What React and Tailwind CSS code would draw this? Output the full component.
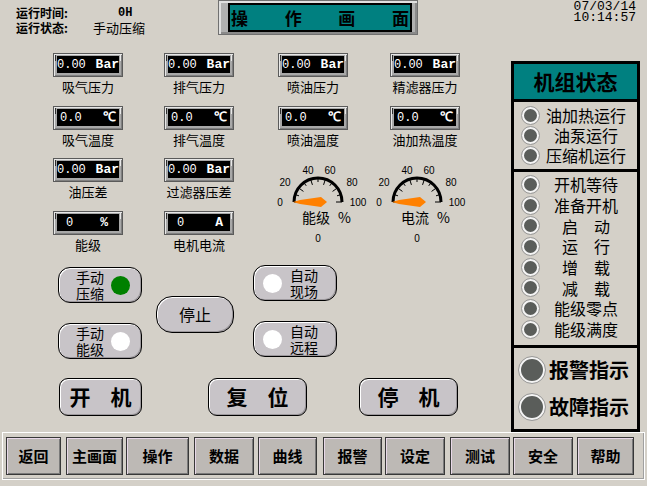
import React from 'react';

const cjk = "font-['Noto_Sans_CJK_SC',sans-serif]";
const mono = "font-['Liberation_Mono',monospace]";

function Readout({ value, unit, pad }) {
  return (
    <div className="w-[70px] h-[24px] bg-[#a8a8a8] border border-[#5a5a5a] shadow-[inset_1px_1px_0_#e8e8e8,inset_-1px_-1px_0_#808080] pt-[2px] pb-[3px] px-[3px] relative">
      <div className="absolute left-[1px] top-[1px] w-[1px] h-[6px] bg-[#303030]" />
      <div className="absolute right-[1px] top-[1px] w-[1px] h-[6px] bg-[#e8e8e8]" />
      <div className={`h-full bg-black flex items-center justify-between text-white ${mono} ${pad}`}>
        <span className="text-[12px] leading-none">{value}</span>
        <span className="text-[13px] font-bold leading-none">{unit}</span>
      </div>
    </div>
  );
}

function Cell({ value, unit, pad, label, h }) {
  return (
    <div className={`flex flex-col ${h}`}>
      <Readout value={value} unit={unit} pad={pad} />
      <div className={`w-[70px] flex justify-center whitespace-nowrap text-[13px] leading-[15px] mt-[2px] text-black ${cjk}`}>{label}</div>
    </div>
  );
}

function Gauge({ label }) {
  const cx = 48, cy = 40, r = 24;
  const ticks = [];
  for (let i = 0; i <= 10; i++) {
    const a = Math.PI * (1 - i / 10);
    const len = i % 2 === 0 ? 6 : 4;
    ticks.push(
      <line key={i}
        x1={cx + r * Math.cos(a)} y1={cy - r * Math.sin(a)}
        x2={cx + (r - len) * Math.cos(a)} y2={cy - (r - len) * Math.sin(a)}
        stroke="black" strokeWidth="1" />
    );
  }
  const labels = [['0', 10, 44], ['20', 15, 24], ['40', 38, 12], ['60', 60, 12], ['80', 82, 24], ['100', 88, 44]];
  return (
    <div className="w-[99px] flex flex-col">
      <svg width="100" height="50" viewBox="0 0 100 50" className="overflow-visible">
        <path d={`M ${cx - r} ${cy} A ${r} ${r} 0 0 1 ${cx + r} ${cy}`} fill="none" stroke="black" strokeWidth="3" />
        {ticks}
        {labels.map(([t, x, y]) => (
          <text key={t} x={x} y={y} textAnchor="middle" fontSize="10" fontFamily="Liberation Sans, sans-serif" fill="black">{t}</text>
        ))}
        <polygon points={`${cx - 25},${cy} ${cx - 18},${cy - 2} ${cx + 3},${cy - 5} ${cx + 9},${cy} ${cx + 3},${cy + 5} ${cx - 18},${cy + 2}`} fill="#ff8000" />
      </svg>
      <div className={`w-full flex justify-center gap-[8px] pl-[14px] -mt-[3px] text-[14px] leading-[16px] text-black ${cjk}`}>
        <span>{label}</span><span>%</span>
      </div>
      <div className="w-full text-center pr-[3px] mt-[8px] text-[10px] leading-[12px] font-['Liberation_Sans',sans-serif]">0</div>
    </div>
  );
}

const pillBase = "bg-[#c8c4c8] border border-black shadow-[inset_1px_1px_0_#ffffff,inset_-1px_-1px_0_#9c989c]";

function DotPill({ top, bottom, dot, dotLeft }) {
  const d = <div className={`w-[19px] h-[19px] rounded-full shrink-0 ${dot}`} />;
  const t = (
    <div className={`flex flex-col text-[14px] leading-[16px] text-black ${cjk}`}>
      <span>{top}</span><span>{bottom}</span>
    </div>
  );
  return (
    <div className={`w-[84px] h-[36px] rounded-[12px] ${pillBase} flex items-center ${dotLeft ? 'pl-[9px] gap-[8px]' : 'pl-[17px] gap-[7px]'}`}>
      {dotLeft ? <>{d}{t}</> : <>{t}{d}</>}
    </div>
  );
}

function BigButton({ a, b, w }) {
  return (
    <div className={`${w} h-[38px] rounded-[9px] ${pillBase} flex items-center justify-center gap-[20px] text-[21px] font-bold text-black ${cjk}`}>
      <span>{a}</span><span>{b}</span>
    </div>
  );
}

function Lamp({ big }) {
  return (
    <div className={`${big ? 'w-[26px] h-[26px]' : 'w-[17px] h-[17px]'} rounded-full bg-[#5a5d5a] border-2 border-[#f4f4f4] outline outline-1 outline-[#9a9a9a] shrink-0`} />
  );
}

function LampRow({ text, h }) {
  return (
    <div className={`flex items-center ${h} pl-[8px]`}>
      <Lamp />
      <div className={`flex-1 text-center pr-[4px] text-[16px] leading-none text-black whitespace-pre ${cjk}`}>{text}</div>
    </div>
  );
}

const bottomButtons = [
  { t: '返回', c: 'ml-[3px] w-[55px]' },
  { t: '主画面', c: 'ml-[5px] w-[57px]' },
  { t: '操作', c: 'ml-[3px] w-[63px]' },
  { t: '数据', c: 'ml-[5px] w-[60px]' },
  { t: '曲线', c: 'ml-[4px] w-[59px]' },
  { t: '报警', c: 'ml-[6px] w-[59px]' },
  { t: '设定', c: 'ml-[3px] w-[60px]' },
  { t: '测试', c: 'ml-[5px] w-[60px]' },
  { t: '安全', c: 'ml-[3px] w-[60px]' },
  { t: '帮助', c: 'ml-[4px] w-[57px]' },
];

export default function App() {
  return (
    <div className="w-[647px] h-[486px] bg-[#d4d0c8] flex flex-col overflow-hidden text-black">
      {/* header */}
      <div className="h-[40px] flex shrink-0">
        <div className={`w-[218px] pl-[16px] pt-[5px] ${cjk}`}>
          <div className="flex h-[15px] items-center">
            <span className="w-[77px] text-[12px] font-bold">运行时间:</span>
            <span className="pl-[25px] text-[12px] font-bold font-['Liberation_Mono',monospace]">0H</span>
          </div>
          <div className="flex h-[15px] items-center">
            <span className="w-[77px] text-[12px] font-bold">运行状态:</span>
            <span className="text-[13px]">手动压缩</span>
          </div>
        </div>
        <div className="w-[200px] h-[35px] bg-[#b0b0b0] border border-[#707070] shadow-[inset_2px_2px_0_#e0e0e0,inset_-2px_-2px_0_#8a8a8a] pl-[9px] pr-[5px] py-[2px]">
          <div className={`h-full border-2 border-black bg-[#008080] flex items-center justify-between px-[1px] text-[17px] font-bold leading-none ${cjk}`}>
            <span>操</span><span>作</span><span>画</span><span>面</span>
          </div>
        </div>
        <div className="flex-1" />
        <div className={`pr-[11px] pt-[1px] text-[13px] leading-[11px] ${mono}`}>
          <div>07/03/14</div>
          <div>10:14:57</div>
        </div>
      </div>

      {/* main */}
      <div className="h-[392px] flex shrink-0">
        <div className="w-[511px] flex flex-col pt-[13px]">
          <div className="grid grid-cols-[111px_114px_112px_112px] pl-[53px]">
            <Cell h="h-[53px]" value="0.00" unit="Bar" pad="pl-0 pr-0" label="吸气压力" />
            <Cell h="h-[53px]" value="0.00" unit="Bar" pad="pl-0 pr-0" label="排气压力" />
            <Cell h="h-[53px]" value="0.00" unit="Bar" pad="pl-0 pr-0" label="喷油压力" />
            <Cell h="h-[53px]" value="0.00" unit="Bar" pad="pl-0 pr-0" label="精滤器压力" />
            <Cell h="h-[52px]" value="0.0" unit="℃" pad="pl-[3px] pr-[3px]" label="吸气温度" />
            <Cell h="h-[52px]" value="0.0" unit="℃" pad="pl-[3px] pr-[3px]" label="排气温度" />
            <Cell h="h-[52px]" value="0.0" unit="℃" pad="pl-[3px] pr-[3px]" label="喷油温度" />
            <Cell h="h-[52px]" value="0.0" unit="℃" pad="pl-[3px] pr-[3px]" label="油加热温度" />
          </div>
          <div className="h-[109px] flex">
            <div className="grid grid-cols-[111px_106px] pl-[53px] content-start">
              <Cell h="h-[53px]" value="0.00" unit="Bar" pad="pl-0 pr-0" label="油压差" />
              <Cell h="h-[53px]" value="0.00" unit="Bar" pad="pl-0 pr-0" label="过滤器压差" />
              <Cell h="h-[53px]" value="0" unit="%" pad="pl-[9px] pr-[11px]" label="能级" />
              <Cell h="h-[53px]" value="0" unit="A" pad="pl-[9px] pr-[7px]" label="电机电流" />
            </div>
            <div className="flex mt-[4px]">
              <Gauge label="能级" />
              <Gauge label="电流" />
            </div>
          </div>
          {/* switches */}
          <div className="flex pl-[58px]">
            <div className="flex flex-col gap-[20px]">
              <DotPill top="手动" bottom="压缩" dot="bg-[#008000]" />
              <DotPill top="手动" bottom="能级" dot="bg-white" />
            </div>
            <div className={`ml-[14px] self-center mt-[2px] w-[78px] h-[37px] rounded-[16px] ${pillBase} flex items-center justify-center text-[16px] ${cjk}`}>停止</div>
            <div className="ml-[19px] flex flex-col gap-[20px] -mt-[2px]">
              <DotPill top="自动" bottom="现场" dot="bg-white" dotLeft />
              <DotPill top="自动" bottom="远程" dot="bg-white" dotLeft />
            </div>
          </div>
          <div className="flex pl-[59px] mt-[19px]">
            <BigButton a="开" b="机" w="w-[83px]" />
            <div className="ml-[66px]"><BigButton a="复" b="位" w="w-[99px]" /></div>
            <div className="ml-[52px]"><BigButton a="停" b="机" w="w-[99px]" /></div>
          </div>
        </div>

        {/* right status panel */}
        <div className="w-[129px] h-[371px] mt-[21px] border-[3px] border-black flex flex-col">
          <div className={`h-[35px] bg-[#008080] flex items-center justify-center text-[21px] font-bold ${cjk}`}>机组状态</div>
          <div className="h-[3px] bg-black" />
          <div className="h-[67px] pt-[3px]">
            <LampRow h="h-[20px]" text="油加热运行" />
            <LampRow h="h-[20px]" text="油泵运行" />
            <LampRow h="h-[20px]" text="压缩机运行" />
          </div>
          <div className="h-[3px] bg-black" />
          <div className="h-[173px] pt-[2px]">
            <LampRow h="h-[20.7px]" text="开机等待" />
            <LampRow h="h-[20.7px]" text="准备开机" />
            <LampRow h="h-[20.7px]" text="启　动" />
            <LampRow h="h-[20.7px]" text="运　行" />
            <LampRow h="h-[20.7px]" text="增　载" />
            <LampRow h="h-[20.7px]" text="减　载" />
            <LampRow h="h-[20.7px]" text="能级零点" />
            <LampRow h="h-[20.7px]" text="能级满度" />
          </div>
          <div className="h-[3px] bg-black" />
          <div className="flex-1 pt-[9px] pl-[5px] flex flex-col gap-[11px]">
            <div className="flex items-center gap-[4px] h-[26px]">
              <Lamp big />
              <span className={`text-[20px] font-bold leading-none ${cjk}`}>报警指示</span>
            </div>
            <div className="flex items-center gap-[4px] h-[26px]">
              <Lamp big />
              <span className={`text-[20px] font-bold leading-none ${cjk}`}>故障指示</span>
            </div>
          </div>
        </div>
      </div>

      {/* bottom bar */}
      <div className="h-[54px] shrink-0">
        <div className="mx-[2px] h-[48px] border border-white shadow-[inset_-1px_-1px_0_#a0a0a0] flex items-center">
          {bottomButtons.map(b => (
            <div key={b.t} className={`${b.c} h-[38px] bg-[#bdb9b5] border border-[#383838] shadow-[inset_1px_1px_0_#e8d8e8,inset_-1px_-1px_0_#7a7a7a] flex items-center justify-center text-[15px] font-bold ${cjk}`}>
              {b.t}
            </div>
          ))}
        </div>
      </div>
    </div>
  );
}
